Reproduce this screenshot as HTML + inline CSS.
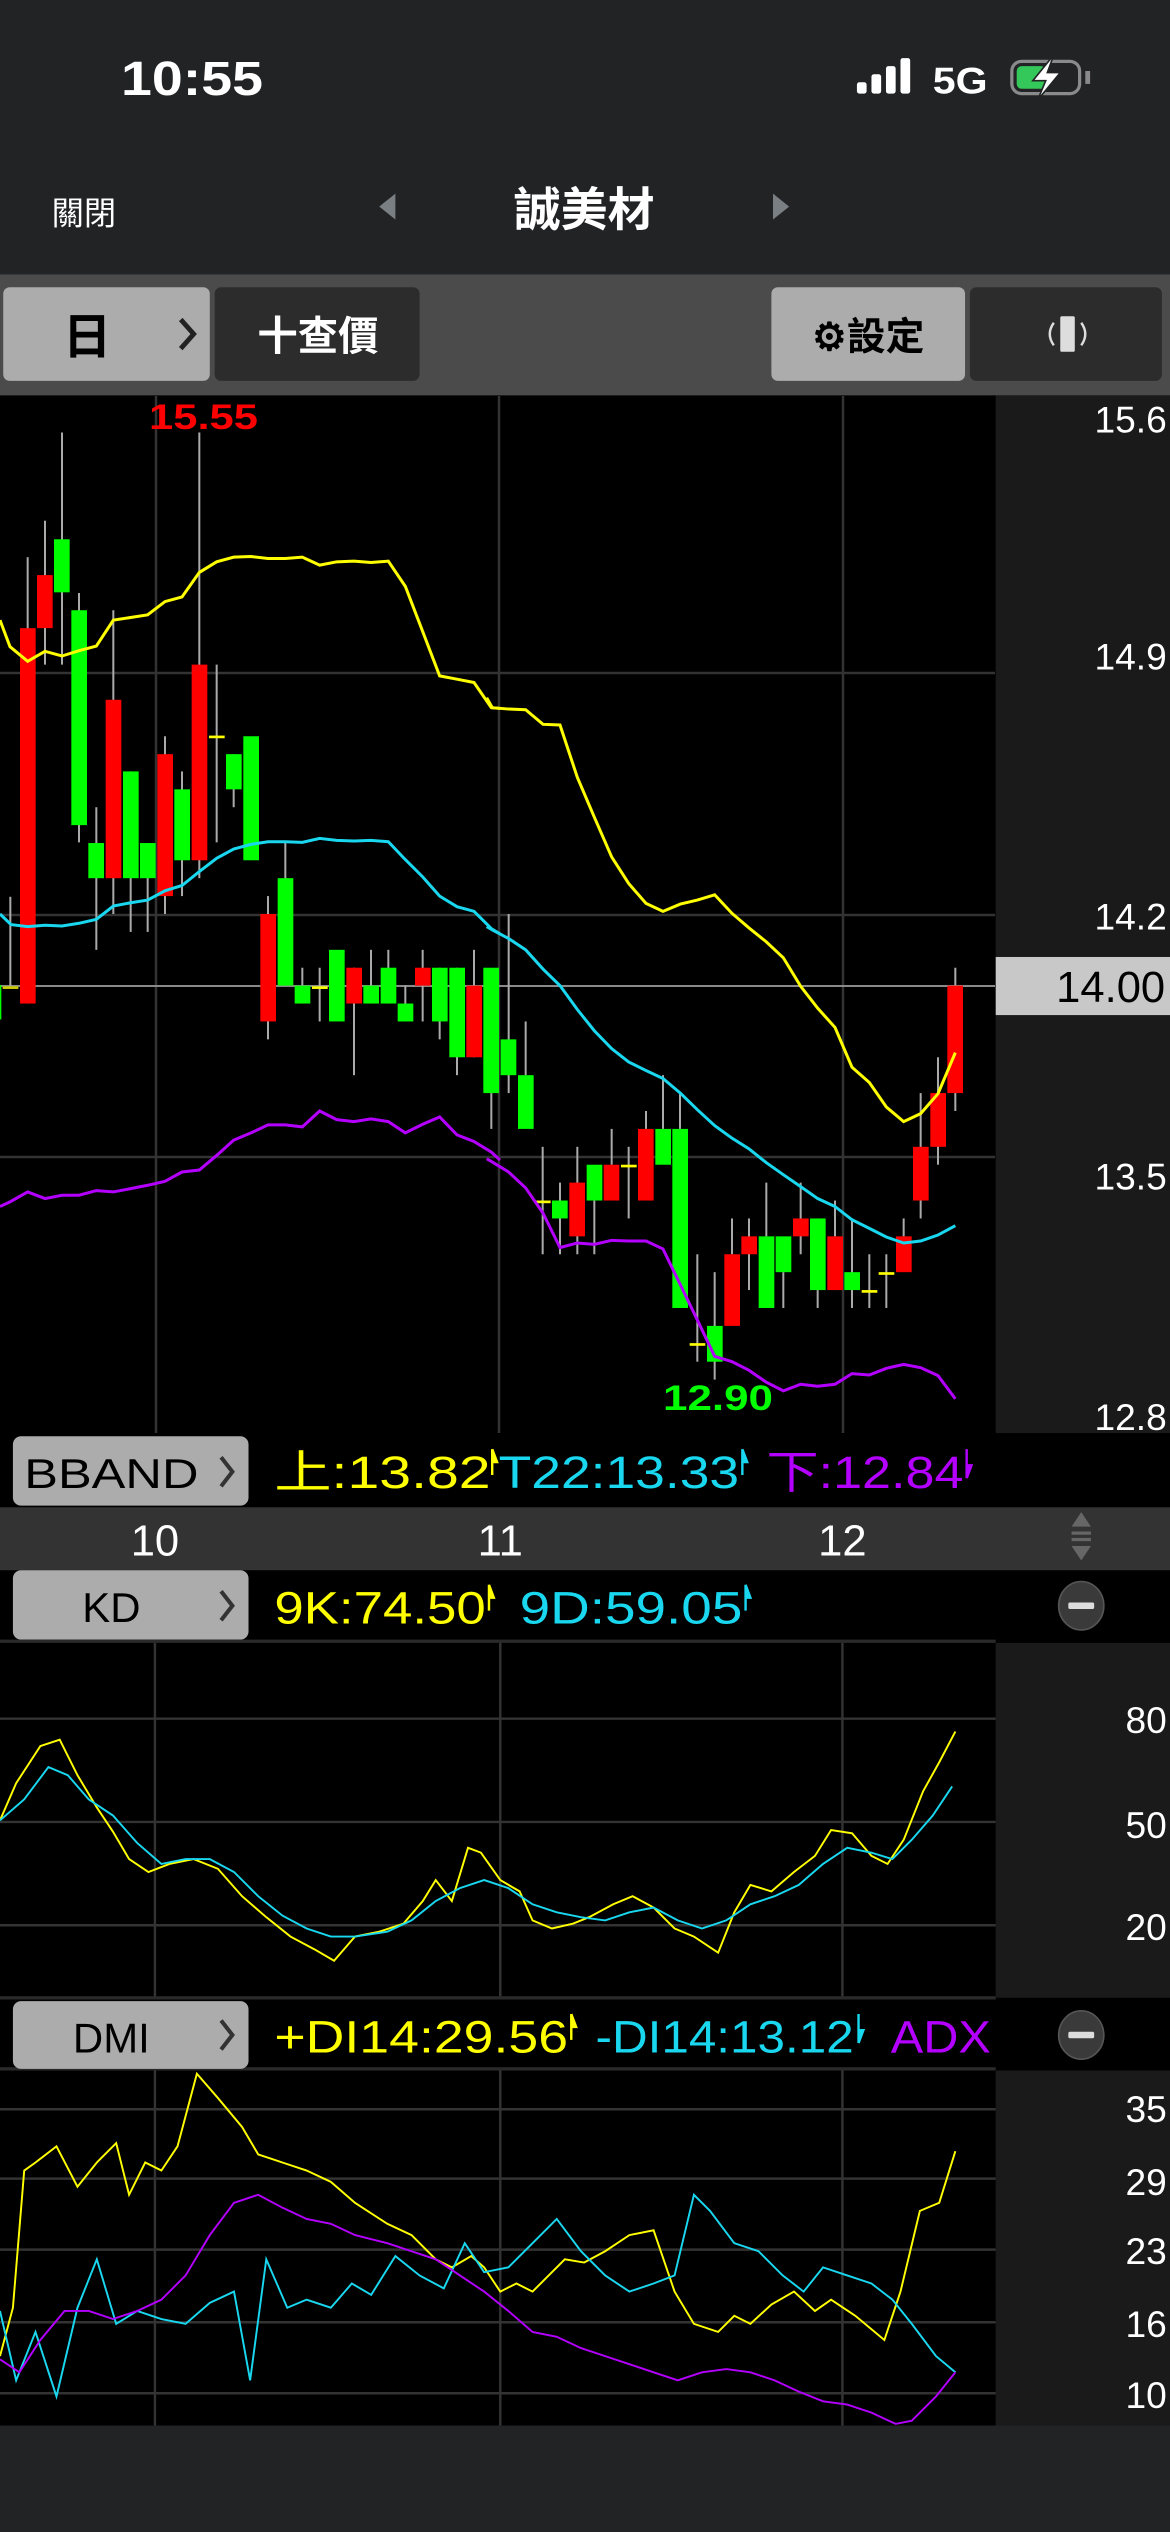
<!DOCTYPE html>
<html><head><meta charset="utf-8"><style>html,body{margin:0;padding:0;background:#000}svg{display:block}</style></head>
<body>
<svg width="1170" height="2532" viewBox="0 0 1170 2532" xmlns="http://www.w3.org/2000/svg" font-family="Liberation Sans, Noto Sans CJK TC, sans-serif">
<rect width="1170" height="2532" fill="#000"/>
<g transform="scale(1.613793)">
<rect x="0" y="0" width="725" height="170" fill="#222325"/>
<text x="75" y="59" font-size="30" font-weight="bold" fill="#fff" textLength="88" lengthAdjust="spacingAndGlyphs">10:55</text>
<rect x="531" y="51" width="6" height="7" rx="1.5" fill="#fff"/><rect x="540" y="46" width="6" height="12" rx="1.5" fill="#fff"/><rect x="549" y="41" width="6" height="17" rx="1.5" fill="#fff"/><rect x="558" y="36" width="6" height="22" rx="1.5" fill="#fff"/>
<text x="578" y="58" font-size="23" font-weight="bold" fill="#fff" textLength="34" lengthAdjust="spacingAndGlyphs">5G</text>
<rect x="627" y="38" width="42" height="20" rx="6" fill="none" stroke="#8a8a8a" stroke-width="2"/>
<rect x="630" y="41" width="18" height="14" rx="3" fill="#34c759"/>
<path d="M674 44 v8" stroke="#8a8a8a" stroke-width="3"/>
<path d="M653 34 L640 50 H648 L643 62 L657 45 H649 Z" fill="#fff" stroke="#222325" stroke-width="1"/>
<text x="32" y="139" font-size="20" fill="#fff">關閉</text>
<path d="M245 120 L235 128 L245 136 Z" fill="#7a7f83"/>
<text x="362" y="140" font-size="29" font-weight="bold" fill="#fff" text-anchor="middle">誠美材</text>
<path d="M479 120 L489 128 L479 136 Z" fill="#7a7f83"/>
<rect x="0" y="170" width="725" height="75" fill="#4b4b4b"/>
<rect x="2" y="178" width="128" height="58" rx="4" fill="#acacac"/>
<text x="54" y="219" font-size="30" font-weight="bold" fill="#000" text-anchor="middle">日</text>
<path d="M112 198 L120 207 L112 216" fill="none" stroke="#222" stroke-width="3"/>
<rect x="133" y="178" width="127" height="58" rx="4" fill="#2c2c2c"/>
<text x="197" y="217" font-size="25" font-weight="bold" fill="#fff" text-anchor="middle">十查價</text>
<rect x="478" y="178" width="120" height="58" rx="4" fill="#acacac"/>
<text x="538" y="217" font-size="24" font-weight="bold" fill="#000" text-anchor="middle">⚙設定</text>
<rect x="601" y="178" width="119" height="58" rx="4" fill="#2c2c2c"/>
<rect x="657" y="196" width="9" height="22" rx="1" fill="#ddd"/>
<path d="M653 200 Q648 207 653 214 M670 200 Q675 207 670 214" fill="none" stroke="#ddd" stroke-width="1.5"/>
<rect x="617" y="245" width="108" height="643" fill="#1a1a1a"/>
<rect x="617" y="1018" width="108" height="220" fill="#1a1a1a"/>
<rect x="617" y="1283" width="108" height="220" fill="#1a1a1a"/>
<rect x="0" y="1503" width="725" height="66" fill="#222325"/>
</g>
<g stroke="#333" stroke-width="2.5">
<line x1="156" y1="396" x2="156" y2="1433"/><line x1="499" y1="396" x2="499" y2="1433"/><line x1="843" y1="396" x2="843" y2="1433"/>
<line x1="0" y1="673" x2="995" y2="673"/><line x1="0" y1="915" x2="995" y2="915"/><line x1="0" y1="1157" x2="995" y2="1157"/>
</g>
<line x1="0" y1="986" x2="995" y2="986" stroke="#8a8a8a" stroke-width="2"/>
<g transform="translate(0 396) scale(0.33333 0.66326)">
<g fill="#aaa">
<rect x="28" y="755" width="6" height="135"/><rect x="80" y="243" width="6" height="673"/><rect x="132" y="188" width="6" height="217"/><rect x="183" y="55" width="6" height="350"/><rect x="234" y="297" width="6" height="376"/><rect x="286" y="620" width="6" height="215"/><rect x="337" y="323" width="6" height="458"/><rect x="389" y="566" width="6" height="242"/><rect x="440" y="674" width="6" height="134"/><rect x="492" y="513" width="6" height="268"/><rect x="543" y="566" width="6" height="188"/><rect x="595" y="55" width="6" height="672"/><rect x="647" y="405" width="6" height="268"/><rect x="698" y="540" width="6" height="80"/><rect x="801" y="754" width="6" height="216"/><rect x="853" y="674" width="6" height="215"/><rect x="904" y="862" width="6" height="54"/><rect x="956" y="862" width="6" height="81"/><rect x="1059" y="862" width="6" height="162"/><rect x="1110" y="835" width="6" height="81"/><rect x="1162" y="835" width="6" height="81"/><rect x="1213" y="889" width="6" height="54"/><rect x="1265" y="835" width="6" height="108"/><rect x="1316" y="862" width="6" height="108"/><rect x="1368" y="862" width="6" height="162"/><rect x="1419" y="835" width="6" height="162"/>
</g>
<rect x="0" y="888" width="4" height="52" fill="#0f0"/>
<rect x="8" y="890" width="47" height="4" fill="#cc0"/>
<g fill="#f00">
<rect x="60" y="350" width="47" height="566"/><rect x="111" y="270" width="47" height="80"/><rect x="317" y="458" width="47" height="269"/><rect x="472" y="540" width="47" height="214"/><rect x="575" y="405" width="47" height="295"/><rect x="781" y="781" width="47" height="162"/><rect x="1039" y="862" width="47" height="54"/><rect x="1245" y="862" width="47" height="27"/><rect x="1399" y="889" width="47" height="108"/>
</g>
<g fill="#0f0">
<rect x="162" y="216" width="47" height="80"/><rect x="214" y="323" width="47" height="324"/><rect x="265" y="674" width="47" height="53"/><rect x="369" y="566" width="47" height="161"/><rect x="420" y="674" width="47" height="53"/><rect x="523" y="593" width="47" height="107"/><rect x="678" y="540" width="47" height="53"/><rect x="730" y="513" width="47" height="187"/><rect x="833" y="727" width="47" height="162"/><rect x="884" y="889" width="47" height="27"/><rect x="987" y="835" width="47" height="108"/><rect x="1090" y="889" width="47" height="27"/><rect x="1142" y="862" width="47" height="54"/><rect x="1193" y="916" width="47" height="27"/><rect x="1296" y="862" width="47" height="81"/><rect x="1348" y="862" width="47" height="135"/>
</g>
<g fill="#ff0"><rect x="627" y="512" width="47" height="4"/><rect x="936" y="890" width="47" height="4"/></g>
<polyline vector-effect="non-scaling-stroke" fill="none" stroke="#ff0" stroke-width="3" points="0,338 30,378 83,400 135,385 186,392 237,384 289,377 340,338 443,330 495,310 546,303 598,266 650,250 701,243 753,242 804,245 856,245 907,243 959,255 1010,250 1062,249 1113,251 1165,249 1216,287 1268,355 1319,422 1371,427 1422,432 1474,470 1500,471"/>
<polyline vector-effect="non-scaling-stroke" fill="none" stroke="#1ad7f0" stroke-width="3" points="0,781 33,797 83,800 135,798 186,799 237,795 289,789 340,769 392,764 443,760 495,746 546,738 598,717 650,697 701,683 753,676 804,672 856,672 907,673 959,667 1010,670 1062,671 1113,670 1165,672 1216,699 1268,725 1319,754 1371,770 1422,777 1474,803 1500,811"/>
<polyline vector-effect="non-scaling-stroke" fill="none" stroke="#b400ff" stroke-width="3" points="0,1222 30,1215 83,1200 135,1210 186,1205 237,1205 289,1198 340,1200 392,1195 443,1190 495,1184 546,1170 598,1167 650,1145 701,1122 753,1111 804,1099 856,1099 907,1102 959,1078 1010,1091 1062,1094 1113,1090 1165,1094 1216,1111 1268,1098 1319,1087 1371,1114 1422,1124 1474,1140 1500,1152"/>
</g>
<g transform="translate(480 396) scale(0.33333 0.66326)">
<g fill="#aaa">
<rect x="31" y="1051" width="6" height="54"/><rect x="83" y="781" width="6" height="270"/><rect x="134" y="943" width="6" height="81"/><rect x="185" y="1132" width="6" height="162"/><rect x="237" y="1186" width="6" height="108"/><rect x="289" y="1132" width="6" height="162"/><rect x="340" y="1213" width="6" height="81"/><rect x="392" y="1105" width="6" height="54"/><rect x="443" y="1132" width="6" height="108"/><rect x="495" y="1078" width="6" height="27"/><rect x="546" y="1024" width="6" height="81"/><rect x="597" y="1051" width="6" height="54"/><rect x="649" y="1294" width="6" height="162"/><rect x="701" y="1321" width="6" height="162"/><rect x="753" y="1240" width="6" height="54"/><rect x="804" y="1240" width="6" height="108"/><rect x="856" y="1186" width="6" height="81"/><rect x="907" y="1321" width="6" height="54"/><rect x="959" y="1186" width="6" height="108"/><rect x="1010" y="1348" width="6" height="27"/><rect x="1062" y="1213" width="6" height="54"/><rect x="1113" y="1240" width="6" height="135"/><rect x="1165" y="1294" width="6" height="81"/><rect x="1216" y="1294" width="6" height="81"/><rect x="1268" y="1240" width="6" height="27"/><rect x="1319" y="1051" width="6" height="189"/><rect x="1371" y="997" width="6" height="162"/><rect x="1423" y="862" width="6" height="216"/>
</g>
<g fill="#0f0">
<rect x="10" y="862" width="47" height="189"/><rect x="62" y="970" width="47" height="54"/><rect x="114" y="1024" width="47" height="81"/><rect x="216" y="1213" width="47" height="27"/><rect x="320" y="1159" width="47" height="54"/><rect x="526" y="1105" width="47" height="54"/><rect x="577" y="1105" width="47" height="270"/><rect x="681" y="1402" width="47" height="54"/><rect x="836" y="1267" width="47" height="108"/><rect x="887" y="1267" width="47" height="54"/><rect x="990" y="1240" width="47" height="108"/><rect x="1093" y="1321" width="47" height="27"/>
</g>
<g fill="#f00">
<rect x="268" y="1186" width="47" height="81"/><rect x="371" y="1159" width="47" height="54"/><rect x="474" y="1105" width="47" height="108"/><rect x="733" y="1294" width="47" height="108"/><rect x="784" y="1267" width="47" height="27"/><rect x="939" y="1240" width="47" height="27"/><rect x="1042" y="1267" width="47" height="81"/><rect x="1248" y="1267" width="47" height="54"/><rect x="1299" y="1132" width="47" height="81"/><rect x="1351" y="1051" width="47" height="81"/><rect x="1402" y="889" width="47" height="162"/>
</g>
<g fill="#ff0"><rect x="165" y="1213" width="47" height="4"/><rect x="423" y="1159" width="47" height="4"/><rect x="629" y="1428" width="47" height="4"/><rect x="1145" y="1348" width="47" height="4"/><rect x="1196" y="1321" width="47" height="4"/></g>
<polyline vector-effect="non-scaling-stroke" fill="none" stroke="#ff0" stroke-width="3" points="20,455 37,470 86,472 137,473 189,495 240,496 292,575 343,635 395,695 446,735 498,765 549,777 601,766 652,760 704,752 756,780 807,802 859,823 910,847 962,890 1013,923 1065,952 1116,1012 1168,1035 1219,1072 1271,1094 1322,1082 1374,1052 1426,990"/>
<polyline vector-effect="non-scaling-stroke" fill="none" stroke="#1ad7f0" stroke-width="3" points="20,800 37,805 86,818 137,835 189,864 240,889 292,925 343,957 395,984 446,1004 498,1017 549,1029 601,1051 652,1076 704,1100 756,1119 807,1135 859,1156 910,1174 962,1192 1013,1210 1065,1222 1116,1242 1168,1255 1219,1268 1271,1277 1322,1274 1374,1265 1426,1251"/>
<polyline vector-effect="non-scaling-stroke" fill="none" stroke="#b400ff" stroke-width="3" points="20,1150 37,1155 86,1170 137,1194 189,1232 240,1284 292,1277 343,1279 395,1273 446,1274 498,1274 549,1286 601,1340 652,1393 704,1448 756,1456 807,1469 859,1487 910,1500 962,1490 1013,1493 1065,1490 1116,1474 1168,1476 1219,1466 1271,1460 1322,1465 1374,1477 1426,1512"/>
</g>
<text x="149" y="429" font-size="35" font-weight="bold" fill="#f00" textLength="109" lengthAdjust="spacingAndGlyphs">15.55</text>
<text x="663" y="1410" font-size="35" font-weight="bold" fill="#0f0" textLength="110" lengthAdjust="spacingAndGlyphs">12.90</text>
<g transform="scale(1.613793)">
<g font-size="23" fill="#fff" text-anchor="end">
<text x="723" y="268">15.6</text><text x="723" y="415">14.9</text><text x="723" y="576">14.2</text><text x="723" y="737">13.5</text><text x="723" y="886">12.8</text>
</g>
<rect x="617" y="593" width="108" height="36" fill="#c8c8c8"/>
<text x="722" y="621" font-size="27" fill="#000" text-anchor="end">14.00</text>
<rect x="0" y="888" width="617" height="46" fill="#000"/>
<rect x="8" y="890" width="146" height="43" rx="5" fill="#acacac"/>
<text x="69" y="922" font-size="26" fill="#000" text-anchor="middle" textLength="108" lengthAdjust="spacingAndGlyphs">BBAND</text>
<path d="M137 903 L144 912 L137 921" fill="none" stroke="#333" stroke-width="2.5"/>
<text x="170" y="922" font-size="28" fill="#ff0" textLength="134" lengthAdjust="spacingAndGlyphs">上:13.82</text>
<path d="M305 898 v16 M305 898 l3 8 h-3" stroke="#ff0" fill="#ff0" stroke-width="1.5"/>
<text x="309" y="922" font-size="28" fill="#1ad7f0" textLength="149" lengthAdjust="spacingAndGlyphs">T22:13.33</text>
<path d="M460 898 v16 M460 898 l3 8 h-3" stroke="#1ad7f0" fill="#1ad7f0" stroke-width="1.5"/>
<text x="475" y="922" font-size="28" fill="#b400ff" textLength="122" lengthAdjust="spacingAndGlyphs">下:12.84</text>
<path d="M599 898 v18 M599 916 l3 -8 h-3" stroke="#b400ff" fill="#b400ff" stroke-width="1.5"/>
<rect x="0" y="934" width="725" height="39" fill="#333"/>
<g font-size="27" fill="#fff" text-anchor="middle"><text x="96" y="964">10</text><text x="310" y="964">11</text><text x="522" y="964">12</text></g>
<path d="M664 946 L670 937 L676 946 Z M664 958 L670 967 L676 958 Z" fill="#666"/>
<rect x="664" y="949" width="12" height="2" fill="#666"/><rect x="664" y="953" width="12" height="2" fill="#666"/>
<rect x="8" y="973" width="146" height="43" rx="5" fill="#acacac"/>
<text x="69" y="1005" font-size="26" fill="#000" text-anchor="middle">KD</text>
<path d="M137 986 L144 995 L137 1004" fill="none" stroke="#333" stroke-width="2.5"/>
<text x="170" y="1006" font-size="28" fill="#ff0" textLength="131" lengthAdjust="spacingAndGlyphs">9K:74.50</text>
<path d="M303 982 v16 M303 982 l3 8 h-3" stroke="#ff0" fill="#ff0" stroke-width="1.5"/>
<text x="322" y="1006" font-size="28" fill="#1ad7f0" textLength="138" lengthAdjust="spacingAndGlyphs">9D:59.05</text>
<path d="M462 982 v16 M462 982 l3 8 h-3" stroke="#1ad7f0" fill="#1ad7f0" stroke-width="1.5"/>
<ellipse cx="670" cy="995" rx="14" ry="15" fill="#3a3a3a" stroke="#555"/>
<rect x="662" y="993" width="16" height="4" rx="1" fill="#ddd"/>
<line x1="0" y1="1017" x2="617" y2="1017" stroke="#2a2a2a" stroke-width="2"/>
<g stroke="#333" stroke-width="1.5">
<line x1="96" y1="1018" x2="96" y2="1238"/><line x1="310" y1="1018" x2="310" y2="1238"/><line x1="522" y1="1018" x2="522" y2="1238"/>
<line x1="0" y1="1065" x2="617" y2="1065"/><line x1="0" y1="1129" x2="617" y2="1129"/><line x1="0" y1="1193" x2="617" y2="1193"/>
<line x1="96" y1="1283" x2="96" y2="1503"/><line x1="310" y1="1283" x2="310" y2="1503"/><line x1="522" y1="1283" x2="522" y2="1503"/>
<line x1="0" y1="1307" x2="617" y2="1307"/><line x1="0" y1="1350" x2="617" y2="1350"/><line x1="0" y1="1394" x2="617" y2="1394"/><line x1="0" y1="1439" x2="617" y2="1439"/><line x1="0" y1="1483" x2="617" y2="1483"/>
</g>
<g font-size="23" fill="#fff" text-anchor="end">
<text x="723" y="1074">80</text><text x="723" y="1139">50</text><text x="723" y="1202">20</text>
<text x="723" y="1315">35</text><text x="723" y="1360">29</text><text x="723" y="1403">23</text><text x="723" y="1448">16</text><text x="723" y="1492">10</text>
</g>
<g fill="none" stroke-width="1.2">
<polyline stroke="#ff0" points="0,1128 10,1105 25,1082 37,1078 48,1100 60,1120 70,1135 80,1152 92,1160 105,1155 120,1152 135,1158 150,1175 165,1188 180,1200 195,1208 207,1215 220,1200 235,1197 250,1192 262,1178 270,1165 280,1178 290,1145 298,1148 310,1165 322,1172 330,1190 342,1195 355,1192 365,1188 380,1180 392,1175 405,1182 418,1195 430,1200 445,1210 455,1185 465,1168 478,1172 492,1160 505,1150 515,1134 528,1136 540,1150 550,1155 560,1140 572,1110 582,1092 592,1073"/>
<polyline stroke="#1ad7f0" points="0,1128 15,1115 30,1095 42,1100 55,1115 70,1125 85,1142 100,1155 115,1152 130,1152 145,1160 160,1175 175,1187 190,1195 205,1200 220,1200 240,1197 255,1190 270,1178 285,1170 300,1165 315,1170 330,1180 345,1185 360,1188 375,1190 390,1185 405,1182 420,1190 435,1195 450,1190 465,1180 480,1175 495,1168 510,1155 525,1145 540,1148 553,1152 565,1140 578,1125 590,1107"/>
<polyline stroke="#ff0" points="0,1460 8,1430 15,1345 22,1340 35,1330 48,1355 60,1340 72,1328 80,1360 90,1340 100,1345 110,1330 122,1285 135,1300 150,1318 160,1335 175,1340 190,1345 205,1352 220,1365 240,1378 255,1385 270,1400 280,1405 292,1398 300,1405 310,1420 320,1415 330,1420 340,1410 350,1400 362,1402 375,1395 390,1385 405,1382 418,1420 430,1440 445,1445 455,1435 465,1440 478,1428 492,1420 505,1432 515,1425 530,1435 548,1450 558,1420 570,1370 582,1365 592,1333"/>
<polyline stroke="#1ad7f0" points="0,1432 10,1475 22,1445 35,1485 48,1430 60,1400 72,1440 85,1432 100,1437 115,1440 130,1427 145,1420 155,1475 165,1400 178,1430 190,1425 205,1430 218,1415 230,1422 245,1398 260,1410 275,1418 288,1390 300,1408 315,1405 330,1390 345,1375 360,1395 375,1410 390,1420 405,1415 418,1410 430,1360 440,1370 455,1390 470,1395 485,1410 498,1420 510,1405 525,1410 540,1415 553,1425 565,1440 580,1460 592,1470"/>
<polyline stroke="#b400ff" points="0,1462 12,1470 25,1450 40,1432 55,1432 70,1437 85,1432 100,1425 115,1410 130,1385 145,1365 160,1360 175,1368 190,1375 205,1378 220,1385 240,1390 255,1395 270,1400 285,1410 300,1420 315,1432 330,1445 345,1448 360,1455 375,1460 390,1465 405,1470 420,1475 435,1470 450,1468 465,1470 480,1475 495,1482 510,1488 525,1490 540,1495 555,1502 565,1500 580,1485 592,1470"/>
</g>
<rect x="0" y="1238" width="725" height="45" fill="#000"/>
<line x1="0" y1="1238" x2="617" y2="1238" stroke="#2a2a2a" stroke-width="2"/>
<line x1="0" y1="1282" x2="617" y2="1282" stroke="#2a2a2a" stroke-width="2"/>
<rect x="8" y="1240" width="146" height="42" rx="5" fill="#acacac"/>
<text x="69" y="1272" font-size="26" fill="#000" text-anchor="middle">DMI</text>
<path d="M137 1252 L144 1261 L137 1270" fill="none" stroke="#333" stroke-width="2.5"/>
<text x="170" y="1272" font-size="28" fill="#ff0" textLength="182" lengthAdjust="spacingAndGlyphs">+DI14:29.56</text>
<path d="M354 1248 v16 M354 1248 l3 8 h-3" stroke="#ff0" fill="#ff0" stroke-width="1.5"/>
<text x="369" y="1272" font-size="28" fill="#1ad7f0" textLength="160" lengthAdjust="spacingAndGlyphs">-DI14:13.12</text>
<path d="M532 1248 v18 M532 1266 l3 -8 h-3" stroke="#1ad7f0" fill="#1ad7f0" stroke-width="1.5"/>
<text x="552" y="1272" font-size="28" fill="#b400ff" textLength="62" lengthAdjust="spacingAndGlyphs">ADX</text>
<ellipse cx="670" cy="1261" rx="14" ry="15" fill="#3a3a3a" stroke="#555"/>
<rect x="662" y="1259" width="16" height="4" rx="1" fill="#ddd"/>
</g>
</svg>
</body></html>
